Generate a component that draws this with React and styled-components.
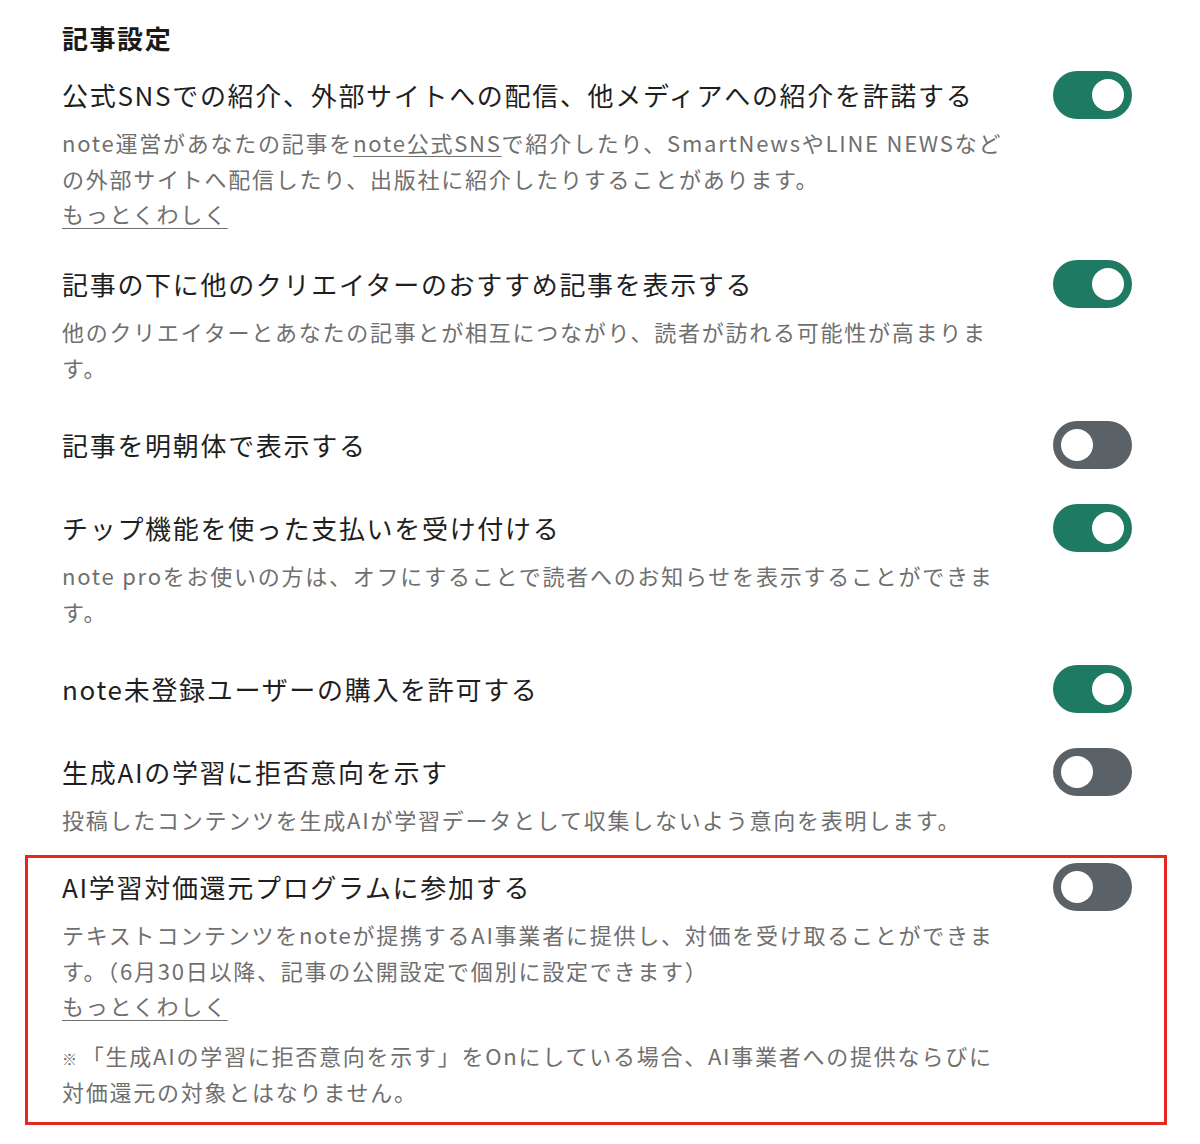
import React from "react";
import styled, { createGlobalStyle } from "styled-components";

const GlobalStyle = createGlobalStyle`
  body {
    margin: 0;
    background: #fff;
    font-family: "Noto Sans CJK JP", "Noto Sans", sans-serif;
    color: #1f1f1f;
  }
`;

const settings = [
  {
    title: "公式SNSでの紹介、外部サイトへの配信、他メディアへの紹介を許諾する",
    desc: (
      <>
        note運営があなたの記事を<u>note公式SNS</u>
        で紹介したり、SmartNewsやLINE NEWSなどの外部サイトへ配信したり、出版社に紹介したりすることがあります。
      </>
    ),
    more: true,
    on: true,
  },
  {
    title: "記事の下に他のクリエイターのおすすめ記事を表示する",
    desc: "他のクリエイターとあなたの記事とが相互につながり、読者が訪れる可能性が高まります。",
    on: true,
  },
  { title: "記事を明朝体で表示する", on: false },
  {
    title: "チップ機能を使った支払いを受け付ける",
    desc: "note proをお使いの方は、オフにすることで読者へのお知らせを表示することができます。",
    on: true,
  },
  { title: "note未登録ユーザーの購入を許可する", on: true },
  {
    title: "生成AIの学習に拒否意向を示す",
    desc: "投稿したコンテンツを生成AIが学習データとして収集しないよう意向を表明します。",
    on: false,
  },
  {
    title: "AI学習対価還元プログラムに参加する",
    desc: "テキストコンテンツをnoteが提携するAI事業者に提供し、対価を受け取ることができます。（6月30日以降、記事の公開設定で個別に設定できます）",
    more: true,
    note: "「生成AIの学習に拒否意向を示す」をOnにしている場合、AI事業者への提供ならびに対価還元の対象とはなりません。",
    on: false,
    highlight: true,
  },
];

function Settings() {
  return (
    <Page>
      <Heading>記事設定</Heading>
      {settings.map((s) => (
        <Row key={s.title} $highlight={s.highlight}>
          <Text>
            <Title>{s.title}</Title>
            {s.desc && <Desc>{s.desc}</Desc>}
            {s.more && <More href="#">もっとくわしく</More>}
            {s.note && (
              <Note>
                <Mark>※</Mark>
                {s.note}
              </Note>
            )}
          </Text>
          <Toggle $on={s.on} role="switch" aria-checked={s.on}>
            <Knob $on={s.on} />
          </Toggle>
        </Row>
      ))}
    </Page>
  );
}

const Page = styled.div`
  width: 1070px;
  padding: 22px 0 20px 62px;
`;

const Heading = styled.h2`
  margin: 0;
  font-size: 26px;
  line-height: 31px;
  font-weight: 700;
  letter-spacing: 0.06em;
  color: #1a1a1a;
`;

const Row = styled.div`
  display: flex;
  justify-content: space-between;
  align-items: flex-start;
  padding: ${(p) => (p.$highlight ? "6px 32px 13px 34px" : "18.5px 0")};
  margin: ${(p) => (p.$highlight ? "0 -35px 0 -37px" : "0")};
  border: ${(p) => (p.$highlight ? "3px solid #e6291f" : "none")};
`;

const Text = styled.div`
  width: 944px;
  display: flex;
  flex-direction: column;
  align-items: flex-start;
`;

const Title = styled.div`
  font-size: 26px;
  line-height: 46px;
  letter-spacing: 0.065em;
  color: #1f1f1f;
`;

const Desc = styled.p`
  margin: 6px 0 0;
  font-size: 22px;
  line-height: 36px;
  letter-spacing: 0.08em;
  color: #6f6f6f;

  u {
    text-decoration-thickness: 1px;
    text-underline-offset: 4px;
  }
`;

const More = styled.a`
  margin: -1px 0 -7px;
  font-size: 22px;
  line-height: 36px;
  letter-spacing: 0.08em;
  color: #6f6f6f;
  text-decoration: underline;
  text-decoration-thickness: 1px;
  text-underline-offset: 5px;
`;

const Note = styled.p`
  margin: 21px 0 0;
  font-size: 22px;
  line-height: 36px;
  letter-spacing: 0.08em;
  color: #6f6f6f;
`;

const Mark = styled.span`
  font-size: 15px;
  line-height: 1;
  margin-right: 3px;
`;

const Toggle = styled.div`
  flex: none;
  width: 79px;
  height: 48px;
  border-radius: 24px;
  margin: -1px 0 -1px;
  background: ${(p) => (p.$on ? "#1e7a63" : "#5a6167")};
  display: flex;
  align-items: center;
  justify-content: ${(p) => (p.$on ? "flex-end" : "flex-start")};
  padding: 0 8px;
  box-sizing: border-box;
`;

const Knob = styled.span`
  width: 32px;
  height: 32px;
  border-radius: 50%;
  background: #fff;
`;

export default function App() {
  return (
    <>
      <GlobalStyle />
      <Settings />
    </>
  );
}
